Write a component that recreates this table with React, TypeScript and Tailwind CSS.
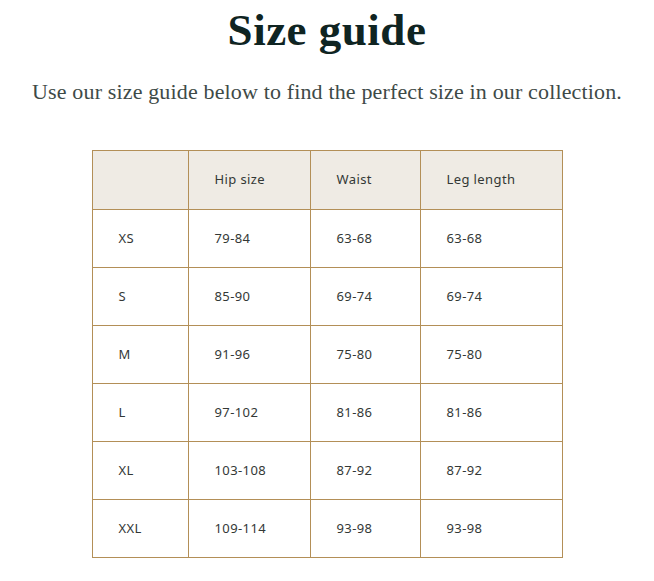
const rows = [
  ['XS', '79-84', '63-68', '63-68'],
  ['S', '85-90', '69-74', '69-74'],
  ['M', '91-96', '75-80', '75-80'],
  ['L', '97-102', '81-86', '81-86'],
  ['XL', '103-108', '87-92', '87-92'],
  ['XXL', '109-114', '93-98', '93-98'],
]

const cell = 'border border-[#b38f57] pl-[26px] text-left font-normal'

export default function App() {
  return (
    <div className="min-h-[581px] w-[654px] bg-white flex flex-col items-center">
      <h1 className="mt-[4px] text-[45px] leading-[52px] tracking-[0.5px] font-bold text-[#0f2422] font-['Liberation_Serif',serif]">
        Size guide
      </h1>
      <p className="mt-[22px] text-[22px] leading-[28px] tracking-[0.15px] text-[#3e4a47] font-['Liberation_Serif',serif]">
        Use our size guide below to find the perfect size in our collection.
      </p>
      <table className="mt-[44px] w-[470px] border-collapse text-[13px] tracking-[0.4px] text-[#333836] font-['Noto_Sans',sans-serif] table-fixed">
        <colgroup>
          <col className="w-[96px]" />
          <col className="w-[122px]" />
          <col className="w-[110px]" />
          <col className="w-[142px]" />
        </colgroup>
        <thead>
          <tr className="h-[59px] bg-[#efebe4]">
            <th className={cell}></th>
            <th className={cell}>Hip size</th>
            <th className={cell}>Waist</th>
            <th className={cell}>Leg length</th>
          </tr>
        </thead>
        <tbody>
          {rows.map((r) => (
            <tr key={r[0]} className="h-[58px]">
              {r.map((v, i) => (
                <td key={i} className={cell}>{v}</td>
              ))}
            </tr>
          ))}
        </tbody>
      </table>
    </div>
  )
}
